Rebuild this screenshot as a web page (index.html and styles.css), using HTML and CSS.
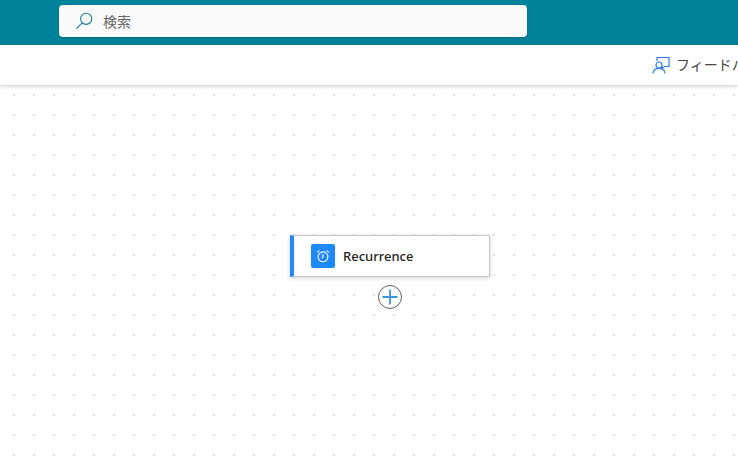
FILE: index.html
```html
<!DOCTYPE html>
<html lang="ja">
<head>
  <meta charset="UTF-8">
  <meta name="viewport" content="width=device-width, initial-scale=1.0">
  <title>Recurrence</title>
  <link rel="stylesheet" href="styles.css">
</head>
<body>
  <header class="topbar">
    <div class="search">
      <svg class="search-icon" width="20" height="20" viewBox="0 0 20 20" fill="none" stroke="#1a7f93" stroke-width="1.1">
        <circle cx="12.2" cy="7.8" r="5.6"/>
        <path d="M8.2 11.8L2.4 17.6"/>
      </svg>
      <span class="search-text">検索</span>
    </div>
  </header>

  <div class="commandbar">
    <button class="feedback" type="button">
      <svg width="18" height="18" viewBox="0 0 18 18" fill="none" stroke="#2b7de9" stroke-width="1.2">
        <path d="M5 5V1.5H17V10.5H12.5L10 12.5V10.5"/>
        <circle cx="7" cy="9" r="3"/>
        <path d="M1 17.5C1.2 14.2 3.6 12.4 7 12.4S12.8 14.2 13 17.5"/>
      </svg>
      <span class="feedback-text">フィードバック</span>
    </button>
  </div>

  <main class="canvas">
    <div class="flow">
      <div class="node">
        <span class="node-icon">
          <svg width="14" height="14" viewBox="0 0 14 14" fill="none" stroke="#fff" stroke-width="1.1">
            <circle cx="7" cy="7.8" r="4.9"/>
            <path d="M7 5V8L5.6 9.2"/>
            <path d="M1.2 3.4L3.4 1.4M12.8 3.4L10.6 1.4"/>
          </svg>
        </span>
        <span class="node-title">Recurrence</span>
      </div>
      <button class="add-step" type="button">
        <svg width="16" height="16" viewBox="0 0 16 16" stroke="#3a95dd" stroke-width="1.8">
          <path d="M8 0.5V15.5M0.5 8H15.5"/>
        </svg>
      </button>
    </div>
  </main>
</body>
</html>
```

FILE: styles.css
```css
html, body {
  height: 100%;
}
body {
  margin: 0;
  display: flex;
  flex-direction: column;
  overflow: hidden;
  background: #fff;
  font-family: "Noto Sans", "Noto Sans CJK JP", sans-serif;
}
.topbar {
  flex: none;
  height: 45px;
  box-sizing: border-box;
  padding: 5px 0 0 59px;
  background: #00829a;
}
.search {
  width: 468px;
  height: 32px;
  box-sizing: border-box;
  display: flex;
  align-items: center;
  gap: 9px;
  padding-left: 15px;
  background: #fafafa;
  border-radius: 4px;
  box-shadow: 0 1px 2px rgba(0,0,0,0.2);
}
.search-text {
  font-family: "Noto Sans CJK JP", sans-serif;
  font-size: 14px;
  color: #666;
}
.commandbar {
  flex: none;
  height: 40px;
  display: flex;
  justify-content: flex-end;
  position: relative;
  z-index: 1;
  background: #fff;
  box-shadow: 0 1px 4px rgba(0,0,0,0.22);
}
.feedback {
  flex: none;
  display: flex;
  align-items: center;
  gap: 6px;
  width: 86px;
  margin: 0;
  padding: 0;
  overflow: hidden;
  border: none;
  background: none;
  white-space: nowrap;
  font-family: "Noto Sans CJK JP", sans-serif;
  font-size: 14px;
  color: #444;
}
.feedback svg {
  flex: none;
}
.feedback-text {
  margin-top: -2px;
}
.canvas {
  flex: 1;
  padding: 150px 0 0 290px;
  background-color: #fff;
  background-image: radial-gradient(circle at 10px 10px, #e3e3e3 1px, transparent 1px);
  background-size: 20px 20px;
  background-position: 4px 0;
}
.flow {
  width: 200px;
  display: flex;
  flex-direction: column;
  align-items: center;
  gap: 8px;
}
.node {
  width: 100%;
  height: 42px;
  box-sizing: border-box;
  display: flex;
  align-items: center;
  gap: 8px;
  padding-left: 17px;
  background: #fff;
  border: 1px solid #c8c6c4;
  border-left: 4px solid #2488ff;
  box-shadow: 0 1px 4px rgba(0,0,0,0.18);
}
.node-icon {
  width: 24px;
  height: 24px;
  display: flex;
  align-items: center;
  justify-content: center;
  background: #1f87ff;
  border-radius: 2px;
}
.node-title {
  font-size: 13px;
  font-weight: 500;
  color: #252423;
}
.add-step {
  width: 24px;
  height: 24px;
  display: flex;
  align-items: center;
  justify-content: center;
  padding: 0;
  background: #fff;
  border: 1px solid #605e5c;
  border-radius: 50%;
}
```
